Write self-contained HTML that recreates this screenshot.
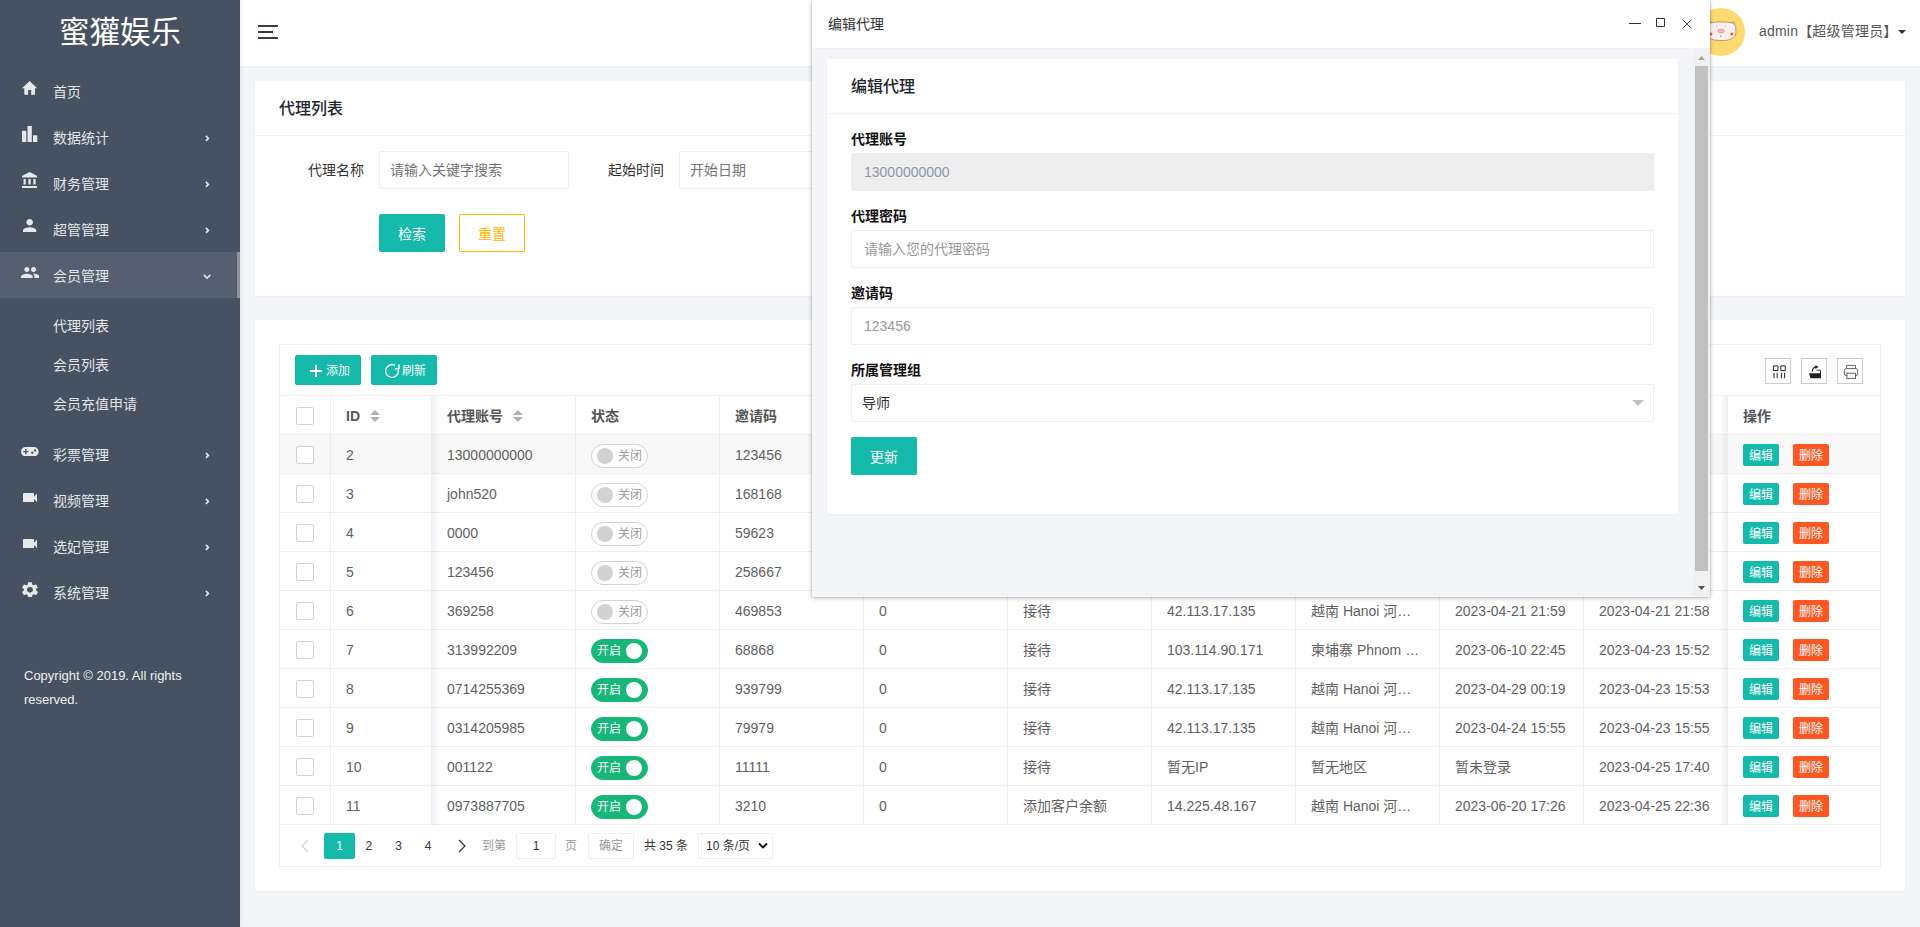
<!DOCTYPE html>
<html lang="zh-CN">
<head>
<meta charset="utf-8">
<title>代理列表</title>
<style>
*{box-sizing:border-box;margin:0;padding:0}
html,body{width:1920px;height:927px;overflow:hidden}
body{position:relative;background:#f4f5f9;font-family:"Liberation Sans","Noto Sans CJK SC",sans-serif;font-size:14px;color:#333;line-height:1}
i,em{font-style:normal}
svg{display:block}
/* ---------- sidebar ---------- */
#side{position:absolute;left:0;top:0;width:240px;height:927px;background:#465161;color:#e4e6ea;z-index:2;box-shadow:1px 0 5px rgba(0,0,0,.070)}
#logo{position:absolute;left:0;top:0;width:240px;height:64px;line-height:64px;text-align:center;font-size:30.500px;color:#fff}
#side .act{position:absolute;left:0;top:252px;width:240px;height:46px;background:#555f70}
#side .act:after{content:"";position:absolute;right:0;top:0;width:3px;height:46px;background:#8c939f}
#side .tx{position:absolute;left:53px;height:46px;line-height:46px;font-size:14px;white-space:nowrap}
#copy{position:absolute;left:24px;top:664px;width:190px;font-size:13px;line-height:24px;color:#f0f1f3}
/* ---------- header ---------- */
#hd{position:absolute;left:240px;top:0;width:1680px;height:66px;background:#fff;box-shadow:0 1px 2px rgba(0,0,0,.04)}
#ham{position:absolute;left:18px;top:25px;width:20px;height:14px}
#ava{position:absolute;left:1457px;top:8px;width:48px;height:48px;border-radius:50%;background:#fdd96f;overflow:hidden}
#usr{position:absolute;left:1519px;top:24px;font-size:14px;color:#555;white-space:nowrap;letter-spacing:.200px}
#usr:after{content:"";position:absolute;left:138.500px;top:6px;border:4px solid transparent;border-top:4px solid #333;border-bottom:0}
/* ---------- cards ---------- */
.card{position:absolute;background:#fff;box-shadow:0 1px 2px rgba(0,0,0,.04)}
#c1{left:255px;top:81px;width:1650px;height:215px}
#c2{left:255px;top:320px;width:1650px;height:571px}
#c1 h2{position:absolute;left:24px;top:20px;font-size:16px;font-weight:500;color:#23262e}
#c1 .dv{position:absolute;left:0;top:54px;width:100%;height:1px;background:#f2f2f4}
.lb{position:absolute;font-size:14px;color:#333;white-space:nowrap}
.inp{position:absolute;height:38px;border:1px solid #eee;border-radius:2px;background:#fff;font-size:14px;line-height:36px;padding-left:10px;color:#757575;white-space:nowrap}
.btn{position:absolute;height:38px;line-height:40px;text-align:center;border-radius:2px;background:#16baaa;color:#fff;font-size:14px;white-space:nowrap}
.btn.warm{background:#fff;border:1px solid #ffb800;color:#ffb800;line-height:38px}
/* ---------- table ---------- */
#tbl{position:absolute;left:24px;top:24px;width:1602px;height:523px;border:1px solid #eee;background:#fff;overflow:hidden}
#tbl .tb{position:absolute;left:0;top:0;width:1600px;height:51px;border-bottom:1px solid #eee}
.sbtn{position:absolute;top:10px;width:66px;height:30px;line-height:32px;border-radius:2px;background:#16baaa;color:#fff;font-size:12px;white-space:nowrap}
.tool{position:absolute;top:13px;width:26px;height:26px;border:1px solid #ccc;background:#fff}
.tr{position:absolute;left:0;width:1600px;height:39px;border-bottom:1px solid #eee;line-height:40px;color:#5f5f5f;font-size:14px;white-space:nowrap}
.tr.th{font-weight:bold;color:#555}
.tr.hov{background:#f8f8f8}
.tr .c{position:absolute;top:0}
.cb{position:absolute;left:16px;top:11px;width:18px;height:18px;border:1px solid #d2d2d2;border-radius:2px;background:#fff}
.sort{position:absolute;left:100%;top:14px;margin-left:10px;width:10px;height:12px}
.sort b{position:absolute;left:0;border:5px solid transparent}
.sort .u{top:-5px;border-bottom-color:#b2b2b2}
.sort .d{top:7px;border-top-color:#b2b2b2}
.vl{position:absolute;top:51px;width:1px;height:429px;background:#eee}
.shl{position:absolute;left:152px;top:51px;width:8px;height:429px;background:linear-gradient(to right,rgba(0,0,0,.05),rgba(0,0,0,0))}
.shr{position:absolute;left:1439px;top:51px;width:8px;height:429px;background:linear-gradient(to left,rgba(0,0,0,.05),rgba(0,0,0,0))}
.sw{position:absolute;left:311px;top:9px;width:57px;height:24px;border:1px solid #d2d2d2;border-radius:12px;background:#fff;line-height:22px;font-size:12px;color:#999}
.sw i{position:absolute;left:5px;top:3px;width:16px;height:16px;border-radius:50%;background:#d2d2d2}
.sw em{position:absolute;left:26px;top:0}
.sw.on{background:#16b777;border-color:#16b777;color:#fff}
.sw.on i{left:34px;background:#fff}
.sw.on em{left:5px}
.bt{position:absolute;top:9px;width:36px;height:22px;line-height:24px;text-align:center;border-radius:2px;font-size:12px;color:#fff}
.bt.ed{left:1463px;background:#16baaa}
.bt.de{left:1513px;background:#ff5722}
/* pagination */
#pg{position:absolute;left:0;top:481px;width:1600px;height:41px;font-size:12px;color:#333;white-space:nowrap}
#pg span{position:absolute;top:7px;height:26px;line-height:26px}
#pg .bx{border:1px solid #eee;border-radius:2px;text-align:center;line-height:24px;background:#fff}
/* ---------- modal ---------- */
#md{position:absolute;left:812px;top:0;width:898px;height:597px;background:#f4f5f9;box-shadow:0 1px 5px rgba(0,0,0,.25),0 0 1.500px rgba(0,0,0,.4);border-radius:1px}
#md .tt{position:absolute;left:0;top:0;width:898px;height:49px;background:#fff;border-bottom:1px solid #f0f0f0;line-height:48px;padding-left:16px;font-size:14px;color:#333}
#md .win{position:absolute;top:0;left:0}
#mc{position:absolute;left:15px;top:59px;width:851px;height:455px;background:#fff;box-shadow:0 1px 2px rgba(0,0,0,.04)}
#mc h3{position:absolute;left:24px;top:20px;font-size:16px;font-weight:500;color:#23262e}
#mc .dv{position:absolute;left:0;top:54px;width:100%;height:1px;background:#f2f2f4}
#mc .fl{position:absolute;left:24px;font-size:14px;font-weight:bold;color:#111;white-space:nowrap}
#mc .fi{position:absolute;left:24px;width:803px;height:38px;border:1px solid #eee;border-radius:2px;background:#fff;font-size:14px;line-height:36px;padding-left:12px;color:#999;white-space:nowrap}
#mc .fi.dis{background:#eee;border-color:#eee;color:#8d96a8}
#sb{position:absolute;left:881px;top:48px;width:17px;height:549px;background:#f1f1f1}
#sb .th{position:absolute;left:2px;top:18px;width:13px;height:505px;background:#c1c1c1}

</style>
</head>
<body>
<div id="side">
<div id="logo">蜜獾娱乐</div>
<div class="act"></div>
<svg style="position:absolute;left:22.2px;top:81.2px" width="15.3" height="13.8" viewBox="2 3 20 17" preserveAspectRatio="none"><path fill="#e6e8ec" d="M10 20v-6h4v6h5v-8h3L12 3 2 12h3v8z"/></svg>
<span class="tx" style="top:69px">首页</span>
<svg style="position:absolute;left:22.3px;top:126px" width="15.3" height="16" viewBox="0 0 15.300 16" preserveAspectRatio="none"><path fill="#e6e8ec" d="M0 4.700h4.300V16H0zM5.500 0h4.300v16H5.500zM11 9.300h4.300V16h-4.300z"/></svg>
<span class="tx" style="top:115px">数据统计</span>
<svg style="position:absolute;left:204.75px;top:135.1px" width="5" height="6.800" viewBox="0 0 5 6.800"><path d="M.900 .900L3.400 3.400 .900 5.900" fill="none" stroke="#e4e6ea" stroke-width="1.600"/></svg>
<svg style="position:absolute;left:21.9px;top:171.8px" width="15.1" height="16.4" viewBox="2 1 20 21" preserveAspectRatio="none"><path fill="#e6e8ec" d="M4 10h3v7H4zm6.500 0h3v7h-3zM2 19h20v3H2zm15-9h3v7h-3zM12 1L2 6v2h20V6z"/></svg>
<span class="tx" style="top:161px">财务管理</span>
<svg style="position:absolute;left:204.75px;top:181.1px" width="5" height="6.800" viewBox="0 0 5 6.800"><path d="M.900 .900L3.400 3.400 .900 5.900" fill="none" stroke="#e4e6ea" stroke-width="1.600"/></svg>
<svg style="position:absolute;left:23.3px;top:219.4px" width="13.3" height="13.1" viewBox="4 4 16 16" preserveAspectRatio="none"><path fill="#e6e8ec" d="M12 12c2.210 0 4-1.790 4-4s-1.790-4-4-4-4 1.790-4 4 1.790 4 4 4zm0 2c-2.670 0-8 1.340-8 4v2h16v-2c0-2.660-5.330-4-8-4z"/></svg>
<span class="tx" style="top:207px">超管管理</span>
<svg style="position:absolute;left:204.75px;top:227.1px" width="5" height="6.800" viewBox="0 0 5 6.800"><path d="M.900 .900L3.400 3.400 .900 5.900" fill="none" stroke="#e4e6ea" stroke-width="1.600"/></svg>
<svg style="position:absolute;left:20.8px;top:266.7px" width="18.4" height="11.6" viewBox="1 5 22 14" preserveAspectRatio="none"><path fill="#e6e8ec" d="M16 11c1.660 0 2.990-1.340 2.990-3S17.660 5 16 5c-1.660 0-3 1.340-3 3s1.340 3 3 3zm-8 0c1.660 0 2.990-1.340 2.990-3S9.660 5 8 5C6.340 5 5 6.340 5 8s1.340 3 3 3zm0 2c-2.330 0-7 1.170-7 3.500V19h14v-2.500c0-2.330-4.670-3.500-7-3.500zm8 0c-.290 0-.620.020-.970.050 1.160.840 1.970 1.970 1.970 3.450V19h6v-2.500c0-2.330-4.670-3.500-7-3.500z"/></svg>
<span class="tx" style="top:253px">会员管理</span>
<svg style="position:absolute;left:203.4px;top:274.1px" width="8.200" height="5.500" viewBox="0 0 8.200 5.500"><path d="M.900 .900L4.100 4.100 7.300 .900" fill="none" stroke="#e4e6ea" stroke-width="1.600"/></svg>
<svg style="position:absolute;left:21.100px;top:446.500px" width="17.600" height="9.300" viewBox="0 0 17.600 9.300"><path fill="#e6e8ec" fill-rule="evenodd" d="M4.650 0h8.300a4.650 4.650 0 0 1 0 9.300h-8.300a4.650 4.650 0 0 1 0-9.300zM4.100 2.100v1.850H2.250v1.400h1.850v1.850h1.400V5.350h1.850v-1.400H5.500V2.100zM11.300 4.500a1.150 1.150 0 1 0 .001 0zM14.100 2.300a1.150 1.150 0 1 0 .001 0z"/></svg>
<span class="tx" style="top:432px">彩票管理</span>
<svg style="position:absolute;left:204.75px;top:452.1px" width="5" height="6.800" viewBox="0 0 5 6.800"><path d="M.900 .900L3.400 3.400 .900 5.900" fill="none" stroke="#e4e6ea" stroke-width="1.600"/></svg>
<svg style="position:absolute;left:23px;top:492.5px" width="14.2" height="9.7" viewBox="3 6 18 12" preserveAspectRatio="none"><path fill="#e6e8ec" d="M17 10.500V7c0-.550-.450-1-1-1H4c-.550 0-1 .450-1 1v10c0 .550.450 1 1 1h12c.550 0 1-.450 1-1v-3.500l4 4v-11l-4 4z"/></svg>
<span class="tx" style="top:478px">视频管理</span>
<svg style="position:absolute;left:204.75px;top:498.1px" width="5" height="6.800" viewBox="0 0 5 6.800"><path d="M.900 .900L3.400 3.400 .900 5.900" fill="none" stroke="#e4e6ea" stroke-width="1.600"/></svg>
<svg style="position:absolute;left:23px;top:538.5px" width="14.2" height="9.7" viewBox="3 6 18 12" preserveAspectRatio="none"><path fill="#e6e8ec" d="M17 10.500V7c0-.550-.450-1-1-1H4c-.550 0-1 .450-1 1v10c0 .550.450 1 1 1h12c.550 0 1-.450 1-1v-3.500l4 4v-11l-4 4z"/></svg>
<span class="tx" style="top:524px">选妃管理</span>
<svg style="position:absolute;left:204.75px;top:544.1px" width="5" height="6.800" viewBox="0 0 5 6.800"><path d="M.900 .900L3.400 3.400 .900 5.900" fill="none" stroke="#e4e6ea" stroke-width="1.600"/></svg>
<svg style="position:absolute;left:22px;top:581.5px" width="16" height="15.7" viewBox="2.600 2 18.800 20" preserveAspectRatio="none"><path fill="#e6e8ec" d="M19.140 12.940c.040-.300.060-.610.060-.940 0-.320-.020-.640-.070-.940l2.030-1.580a.490.490 0 0 0 .120-.610l-1.920-3.320a.488.488 0 0 0-.590-.220l-2.390.960c-.500-.380-1.030-.700-1.620-.940l-.360-2.540a.484.484 0 0 0-.480-.410h-3.840c-.240 0-.430.170-.470.410l-.360 2.540c-.590.240-1.130.570-1.620.940l-2.390-.960c-.220-.080-.470 0-.590.220L2.740 8.870c-.120.210-.080.470.120.610l2.030 1.580c-.050.300-.090.630-.090.940s.020.640.070.940l-2.030 1.580a.490.490 0 0 0-.120.610l1.920 3.320c.120.220.370.290.590.220l2.390-.960c.500.380 1.030.700 1.620.940l.360 2.540c.050.240.240.410.480.410h3.840c.240 0 .440-.170.470-.410l.360-2.540c.590-.240 1.130-.560 1.620-.940l2.390.960c.220.080.470 0 .590-.220l1.920-3.320c.120-.220.070-.470-.120-.610l-2.010-1.580zM12 15.600c-1.980 0-3.600-1.620-3.600-3.600s1.620-3.600 3.600-3.600 3.600 1.620 3.600 3.600-1.620 3.600-3.600 3.600z"/></svg>
<span class="tx" style="top:570px">系统管理</span>
<svg style="position:absolute;left:204.75px;top:590.1px" width="5" height="6.800" viewBox="0 0 5 6.800"><path d="M.900 .900L3.400 3.400 .900 5.900" fill="none" stroke="#e4e6ea" stroke-width="1.600"/></svg>
<span class="tx" style="top:303px">代理列表</span>
<span class="tx" style="top:342px">会员列表</span>
<span class="tx" style="top:381px">会员充值申请</span>
<div id="copy">Copyright © 2019. All rights reserved.</div>
</div>

<div id="hd">
<svg id="ham" viewBox="0 0 20 14"><path d="M0 0h20v2H0zM0 6h15v2H0zM0 12h20v2H0z" fill="#373c47"/></svg>
<div id="ava"><svg width="48" height="48" viewBox="0 0 48 48"><circle cx="12.300" cy="16" r="2" fill="#fdf0ee" stroke="#6b4a3a" stroke-width=".500"/><circle cx="35.700" cy="16" r="2" fill="#fdf0ee" stroke="#6b4a3a" stroke-width=".500"/><path d="M9.200 20C9.200 15.500 12 14 24 14S38.800 15.500 38.800 20L38.800 25C38.800 30 33 32.600 24 32.600S9.200 30 9.200 25Z" fill="#fdf0ee" stroke="#6b4a3a" stroke-width=".550" stroke-opacity=".850"/><ellipse cx="24" cy="23" rx="3.200" ry="2" fill="#f9bdbd" stroke="#8a5a50" stroke-width=".350"/><circle cx="13.800" cy="26" r="1.600" fill="#ff5a1f"/><circle cx="34.900" cy="26" r="1.600" fill="#ff5a1f"/><circle cx="19.400" cy="18" r=".450" fill="#555"/><circle cx="28.500" cy="18" r=".450" fill="#555"/><path d="M23.800 27.500v1.600" stroke="#6b4a3a" stroke-width=".700"/></svg></div>
<div id="usr">admin【超级管理员】</div>
</div>
<div class="card" id="c1">
<h2>代理列表</h2>
<div class="dv"></div>
<span class="lb" style="left:53px;top:82px">代理名称</span>
<div class="inp" style="left:124px;top:70px;width:190px">请输入关键字搜索</div>
<span class="lb" style="left:353px;top:82px">起始时间</span>
<div class="inp" style="left:424px;top:70px;width:190px">开始日期</div>
<div class="btn" style="left:124px;top:133px;width:66px">检索</div>
<div class="btn warm" style="left:204px;top:133px;width:66px">重置</div>
</div>
<div class="card" id="c2">
<div id="tbl">
<div class="tb">
<div class="sbtn" style="left:15px"><svg style="position:absolute;left:15px;top:10px" width="12" height="12" viewBox="0 0 12 12"><path d="M6 0v12M0 6h12" stroke="#fff" stroke-width="2"/></svg><span style="position:absolute;left:31px;top:0">添加</span></div>
<div class="sbtn" style="left:91px"><svg style="position:absolute;left:13px;top:8px" width="16" height="16" viewBox="0 0 16 16"><path d="M11.200 2.460A6.400 6.400 0 1 0 14.300 6.900" stroke="#fff" stroke-width="1.400" fill="none"/><path d="M10.700 5.800H15V1.500" stroke="#fff" stroke-width="1.400" fill="none"/></svg><span style="position:absolute;left:31px;top:0">刷新</span></div>
<div class="tool" style="left:1485px"><svg width="24" height="24" viewBox="0 0 24 24"><path d="M7.400 6.900h4.500v4.700h-4.500zM14.800 6.900h4.500v4.700h-4.500z" fill="none" stroke="#222" stroke-width="1"/><path d="M8 13.800v5.400M11.200 13.800v5.400M15.400 13.800v5.400M18.600 13.800v5.400" stroke="#222" stroke-width="1" fill="none"/></svg></div>
<div class="tool" style="left:1521px"><svg width="24" height="24" viewBox="0 0 24 24"><path d="M7 14.200h11.800v5h-10.400z" fill="#222"/><path d="M14.500 11.200h4v8" fill="none" stroke="#222" stroke-width=".900"/><path d="M10.200 12.800c.200-2.800 1.800-4.600 4-4.900" fill="none" stroke="#222" stroke-width="1.200"/><path d="M13.400 5.900l3.100 2-3.100 2z" fill="#222"/></svg></div>
<div class="tool" style="left:1557px"><svg width="24" height="24" viewBox="0 0 24 24"><path d="M8.600 9.500v-3.100h8.900v3.100" fill="none" stroke="#555" stroke-width=".900"/><rect x="6.400" y="9.600" width="13.200" height="7" rx="1.800" fill="none" stroke="#555" stroke-width=".900"/><rect x="8.900" y="14.200" width="8.600" height="5.200" fill="#fff" stroke="#555" stroke-width=".900"/></svg></div>
</div>
<div class="tr th" style="top:51px">
<span class="cb"></span>
<span class="c" style="left:66px">ID<i class="sort"><b class="u"></b><b class="d"></b></i></span>
<span class="c" style="left:167px">代理账号<i class="sort"><b class="u"></b><b class="d"></b></i></span>
<span class="c" style="left:311px">状态</span>
<span class="c" style="left:455px">邀请码</span>
<span class="c" style="left:599px">余额</span>
<span class="c" style="left:743px">所属管理组</span>
<span class="c" style="left:887px">登录IP</span>
<span class="c" style="left:1031px">登录地区</span>
<span class="c" style="left:1175px">最后登录时间</span>
<span class="c" style="left:1319px">创建时间</span>
<span class="c" style="left:1463px">操作</span>
</div>
<div class="tr hov" style="top:90px">
<span class="cb"></span>
<span class="c" style="left:66px">2</span>
<span class="c" style="left:167px">13000000000</span>
<span class="sw"><i></i><em>关闭</em></span>
<span class="c" style="left:455px">123456</span>
<span class="c" style="left:599px">0</span>
<span class="c" style="left:743px">接待</span>
<span class="c" style="left:887px">42.113.17.135</span>
<span class="c" style="left:1031px">越南 Hanoi 河…</span>
<span class="c" style="left:1175px">2023-04-21 21:59</span>
<span class="c" style="left:1319px">2023-04-21 21:58</span>
<span class="bt ed">编辑</span><span class="bt de">删除</span>
</div>
<div class="tr" style="top:129px">
<span class="cb"></span>
<span class="c" style="left:66px">3</span>
<span class="c" style="left:167px">john520</span>
<span class="sw"><i></i><em>关闭</em></span>
<span class="c" style="left:455px">168168</span>
<span class="c" style="left:599px">0</span>
<span class="c" style="left:743px">接待</span>
<span class="c" style="left:887px">42.113.17.135</span>
<span class="c" style="left:1031px">越南 Hanoi 河…</span>
<span class="c" style="left:1175px">2023-04-21 21:59</span>
<span class="c" style="left:1319px">2023-04-21 21:58</span>
<span class="bt ed">编辑</span><span class="bt de">删除</span>
</div>
<div class="tr" style="top:168px">
<span class="cb"></span>
<span class="c" style="left:66px">4</span>
<span class="c" style="left:167px">0000</span>
<span class="sw"><i></i><em>关闭</em></span>
<span class="c" style="left:455px">59623</span>
<span class="c" style="left:599px">0</span>
<span class="c" style="left:743px">接待</span>
<span class="c" style="left:887px">42.113.17.135</span>
<span class="c" style="left:1031px">越南 Hanoi 河…</span>
<span class="c" style="left:1175px">2023-04-21 21:59</span>
<span class="c" style="left:1319px">2023-04-21 21:58</span>
<span class="bt ed">编辑</span><span class="bt de">删除</span>
</div>
<div class="tr" style="top:207px">
<span class="cb"></span>
<span class="c" style="left:66px">5</span>
<span class="c" style="left:167px">123456</span>
<span class="sw"><i></i><em>关闭</em></span>
<span class="c" style="left:455px">258667</span>
<span class="c" style="left:599px">0</span>
<span class="c" style="left:743px">接待</span>
<span class="c" style="left:887px">42.113.17.135</span>
<span class="c" style="left:1031px">越南 Hanoi 河…</span>
<span class="c" style="left:1175px">2023-04-21 21:59</span>
<span class="c" style="left:1319px">2023-04-21 21:58</span>
<span class="bt ed">编辑</span><span class="bt de">删除</span>
</div>
<div class="tr" style="top:246px">
<span class="cb"></span>
<span class="c" style="left:66px">6</span>
<span class="c" style="left:167px">369258</span>
<span class="sw"><i></i><em>关闭</em></span>
<span class="c" style="left:455px">469853</span>
<span class="c" style="left:599px">0</span>
<span class="c" style="left:743px">接待</span>
<span class="c" style="left:887px">42.113.17.135</span>
<span class="c" style="left:1031px">越南 Hanoi 河…</span>
<span class="c" style="left:1175px">2023-04-21 21:59</span>
<span class="c" style="left:1319px">2023-04-21 21:58</span>
<span class="bt ed">编辑</span><span class="bt de">删除</span>
</div>
<div class="tr" style="top:285px">
<span class="cb"></span>
<span class="c" style="left:66px">7</span>
<span class="c" style="left:167px">313992209</span>
<span class="sw on"><em>开启</em><i></i></span>
<span class="c" style="left:455px">68868</span>
<span class="c" style="left:599px">0</span>
<span class="c" style="left:743px">接待</span>
<span class="c" style="left:887px">103.114.90.171</span>
<span class="c" style="left:1031px">柬埔寨 Phnom …</span>
<span class="c" style="left:1175px">2023-06-10 22:45</span>
<span class="c" style="left:1319px">2023-04-23 15:52</span>
<span class="bt ed">编辑</span><span class="bt de">删除</span>
</div>
<div class="tr" style="top:324px">
<span class="cb"></span>
<span class="c" style="left:66px">8</span>
<span class="c" style="left:167px">0714255369</span>
<span class="sw on"><em>开启</em><i></i></span>
<span class="c" style="left:455px">939799</span>
<span class="c" style="left:599px">0</span>
<span class="c" style="left:743px">接待</span>
<span class="c" style="left:887px">42.113.17.135</span>
<span class="c" style="left:1031px">越南 Hanoi 河…</span>
<span class="c" style="left:1175px">2023-04-29 00:19</span>
<span class="c" style="left:1319px">2023-04-23 15:53</span>
<span class="bt ed">编辑</span><span class="bt de">删除</span>
</div>
<div class="tr" style="top:363px">
<span class="cb"></span>
<span class="c" style="left:66px">9</span>
<span class="c" style="left:167px">0314205985</span>
<span class="sw on"><em>开启</em><i></i></span>
<span class="c" style="left:455px">79979</span>
<span class="c" style="left:599px">0</span>
<span class="c" style="left:743px">接待</span>
<span class="c" style="left:887px">42.113.17.135</span>
<span class="c" style="left:1031px">越南 Hanoi 河…</span>
<span class="c" style="left:1175px">2023-04-24 15:55</span>
<span class="c" style="left:1319px">2023-04-23 15:55</span>
<span class="bt ed">编辑</span><span class="bt de">删除</span>
</div>
<div class="tr" style="top:402px">
<span class="cb"></span>
<span class="c" style="left:66px">10</span>
<span class="c" style="left:167px">001122</span>
<span class="sw on"><em>开启</em><i></i></span>
<span class="c" style="left:455px">11111</span>
<span class="c" style="left:599px">0</span>
<span class="c" style="left:743px">接待</span>
<span class="c" style="left:887px">暂无IP</span>
<span class="c" style="left:1031px">暂无地区</span>
<span class="c" style="left:1175px">暂未登录</span>
<span class="c" style="left:1319px">2023-04-25 17:40</span>
<span class="bt ed">编辑</span><span class="bt de">删除</span>
</div>
<div class="tr" style="top:441px">
<span class="cb"></span>
<span class="c" style="left:66px">11</span>
<span class="c" style="left:167px">0973887705</span>
<span class="sw on"><em>开启</em><i></i></span>
<span class="c" style="left:455px">3210</span>
<span class="c" style="left:599px">0</span>
<span class="c" style="left:743px">添加客户余额</span>
<span class="c" style="left:887px">14.225.48.167</span>
<span class="c" style="left:1031px">越南 Hanoi 河…</span>
<span class="c" style="left:1175px">2023-06-20 17:26</span>
<span class="c" style="left:1319px">2023-04-25 22:36</span>
<span class="bt ed">编辑</span><span class="bt de">删除</span>
</div>
<div class="vl" style="left:50px"></div>
<div class="vl" style="left:151px"></div>
<div class="vl" style="left:295px"></div>
<div class="vl" style="left:439px"></div>
<div class="vl" style="left:583px"></div>
<div class="vl" style="left:727px"></div>
<div class="vl" style="left:871px"></div>
<div class="vl" style="left:1015px"></div>
<div class="vl" style="left:1159px"></div>
<div class="vl" style="left:1303px"></div>
<div class="vl" style="left:1447px"></div>
<div class="shl"></div><div class="shr"></div>
<div id="pg">
<svg style="position:absolute;left:20px;top:13px" width="10" height="14" viewBox="0 0 10 14"><path d="M8 1L2 7l6 6" fill="none" stroke="#d2d2d2" stroke-width="1.200"/></svg>
<span class="cur" style="left:44px;width:31px;background:#16baaa;color:#fff;text-align:center;border-radius:2px">1</span>
<span style="left:84.800px;width:8px;text-align:center">2</span>
<span style="left:114.600px;width:8px;text-align:center">3</span>
<span style="left:144.200px;width:8px;text-align:center">4</span>
<svg style="position:absolute;left:177.300px;top:13px" width="10" height="14" viewBox="0 0 10 14"><path d="M2 1l6 6-6 6" fill="none" stroke="#333" stroke-width="1.200"/></svg>
<span style="left:202px;color:#999">到第</span>
<span class="bx" style="left:236px;width:40px">1</span>
<span style="left:285px;color:#999">页</span>
<span class="bx" style="left:308px;width:46px;color:#999">确定</span>
<span style="left:364px">共 35 条</span>
<span class="bx" style="left:418px;width:75px;text-align:left;padding-left:7px">10 条/页<svg style="position:absolute;left:59px;top:8px" width="10" height="8" viewBox="0 0 10 8"><path d="M1 1.500l4 4 4-4" fill="none" stroke="#111" stroke-width="1.800"/></svg></span>
</div>
</div>
</div>

<div id="md">
<div class="tt">编辑代理</div>
<svg class="win" width="898" height="48" viewBox="0 0 898 48"><path d="M817 23.500h12" stroke="#2d2f3b" stroke-width="1" fill="none"/><path d="M844.500 18.500h8v8h-8z" stroke="#2d2f3b" stroke-width="1" fill="none"/><path d="M870.500 19.500l9 9M879.500 19.500l-9 9" stroke="#484a52" stroke-width="1" fill="none"/></svg>
<div id="mc">
<h3>编辑代理</h3>
<div class="dv"></div>
<span class="fl" style="top:73px">代理账号</span>
<div class="fi dis" style="top:94px">13000000000</div>
<span class="fl" style="top:150px">代理密码</span>
<div class="fi" style="top:171px">请输入您的代理密码</div>
<span class="fl" style="top:227px">邀请码</span>
<div class="fi" style="top:248px">123456</div>
<span class="fl" style="top:304px">所属管理组</span>
<div class="fi" style="top:325px;padding-left:10px;color:#333">导师<svg style="position:absolute;left:780px;top:15px" width="12" height="6" viewBox="0 0 12 6"><path d="M0 0h12L6 6z" fill="#c2c2c2"/></svg></div>
<div class="btn" style="left:24px;top:378px;width:66px">更新</div>
</div>
<div id="sb"><svg style="position:absolute;left:5px;top:8px" width="7" height="4" viewBox="0 0 7 4"><path d="M0 4h7L3.500 0z" fill="#a3a3a3"/></svg><div class="th"></div><svg style="position:absolute;left:5px;top:538px" width="7" height="4" viewBox="0 0 7 4"><path d="M0 0h7L3.500 4z" fill="#505050"/></svg></div>
</div>

</body>
</html>
